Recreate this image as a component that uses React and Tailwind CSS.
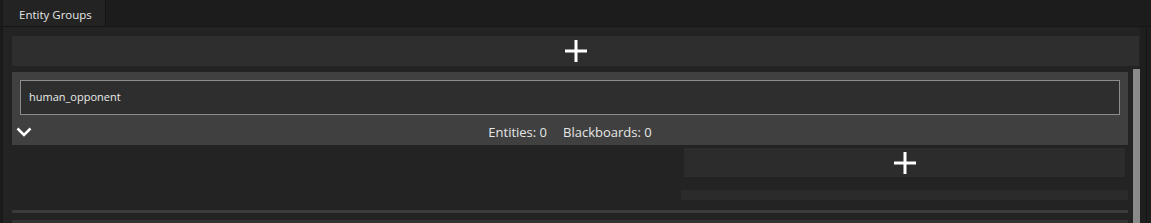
const Plus = () => (
  <svg width="22" height="22" viewBox="0 0 22 22" className="text-white">
    <path d="M11 0v22M0 11h22" stroke="currentColor" strokeWidth="3" />
  </svg>
);

const Chevron = () => (
  <svg width="16" height="11" viewBox="0 0 16 11" className="text-white absolute left-[-4px] top-[12px]">
    <path d="M1.5 1.5l6.5 6.5 6.5-6.5" stroke="currentColor" strokeWidth="2.5" fill="none" />
  </svg>
);

const App = () => {
  return (
    <div
      className="w-[1151px] h-[223px] bg-[#1c1c1c] flex flex-col overflow-hidden text-[#e6e6e6]"
      style={{ fontFamily: '"Open Sans", "Noto Sans", sans-serif' }}
    >
      {/* Tab strip */}
      <div className="h-[27px] flex border-b border-[#161616]">
        <div className="w-[106px] bg-[#232323] border-r border-[#151515] border-l-[3px] border-l-[#1a1a1a] text-[11.5px] pl-[16px] pt-[6px]">
          Entity Groups
        </div>
      </div>

      {/* Panel */}
      <div className="flex-1 flex min-h-0">
        <div className="flex-1 bg-[#232323] border-l-[3px] border-[#1a1a1a] pl-[9px] flex flex-col min-h-0">
          <button className="mt-[9px] mr-px h-[30px] bg-[#2e2e2e] flex items-center justify-center">
            <Plus />
          </button>

          <div className="mt-[3px] flex flex-1 min-h-0 gap-[5px]">
            <div className="flex-1 flex flex-col min-h-0">
              {/* Group card */}
              <div className="mt-[3px] bg-[#404040] px-[8px] pt-[8px]">
                <div className="h-[35px] bg-[#2e2e2e] border border-[#8c8c8c] flex items-center pl-[8px] text-[11px] text-[#ececec]">
                  human_opponent
                </div>
                <div className="h-[30px] relative flex items-center justify-center gap-[16px] text-[13px] pt-[6px]">
                  <Chevron />
                  <span>Entities: 0</span>
                  <span>Blackboards: 0</span>
                </div>
              </div>

              <div className="flex justify-end">
                <button className="mt-[3px] mr-[3px] w-[441px] h-[29px] bg-[#2c2c2c] flex items-center justify-center">
                  <Plus />
                </button>
              </div>
              <div className="flex justify-end">
                <div className="mt-[13px] w-[447px] h-[10px] bg-[#2b2b2b]" />
              </div>
              <div className="mt-[10px] h-[3px] bg-[#3b3b3b]" />
              <div className="mt-[7px] h-[3px] bg-[#333333]" />
            </div>
            <div className="w-[7px] bg-[#8a8a8a]" />
          </div>
        </div>
        <div className="w-[11px] bg-[#1e1e1e] flex">
          <div className="ml-[6px] w-px bg-[#141414]" />
        </div>
      </div>
    </div>
  );
};

export default App;
